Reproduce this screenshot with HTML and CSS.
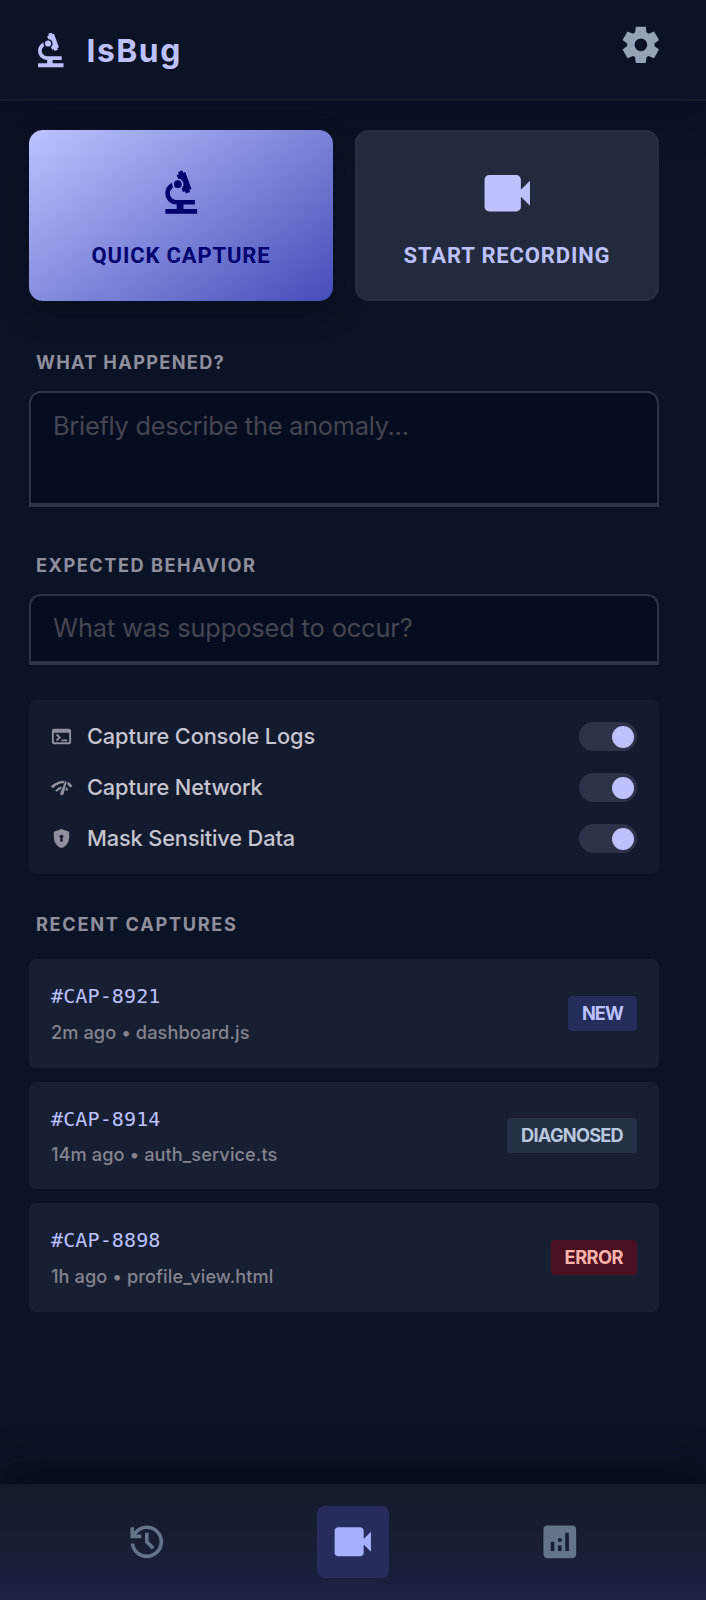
FILE: index.html
```html
<!DOCTYPE html>
<html lang="en">

<head>
    <meta charset="UTF-8">
    <meta name="viewport" content="width=device-width, initial-scale=1.0">
    <title>IsBug</title>
    <link rel="stylesheet" href="styles.css">
</head>

<body>
    <!-- shared icons -->
    <svg class="sprite">
        <symbol id="biotech" viewBox="0 0 24 24">
            <path d="M5 21v-2.1h5V17c-2.76 0-5-2.24-5-5 0-2.08 1.28-3.87 3.09-4.62C8.04 7.58 8 7.79 8 8c0 .54.17 1.03.46 1.44C7.59 9.96 7 10.91 7 12c0 1.66 1.34 3 3 3h8v2h-5v1.9h6V21z" />
            <path d="M10.56 5.51C11.91 5.54 13 6.64 13 8c0 .75-.33 1.41-.85 1.87l.59 1.62.94-.34.34.94 1.88-.68-.34-.94.94-.34-2.74-7.53-.94.34-.34-.94-1.88.68.34.94-.94.35z" />
            <circle cx="10.5" cy="8" r="1.7" />
        </symbol>
        <symbol id="videocam" viewBox="0 -960 960 960">
            <path d="M160-160q-33 0-56.5-23.5T80-240v-480q0-33 23.5-56.5T160-800h480q33 0 56.5 23.5T720-720v180l160-160v440L720-420v180q0 33-23.5 56.5T640-160H160Z" />
        </symbol>
    </svg>

    <header class="header">
        <div class="brand">
            <svg class="icon"><use href="#biotech" /></svg>
            <h1>IsBug</h1>
        </div>
        <button class="settings">
            <svg class="icon" viewBox="0 -960 960 960">
                <path d="m370-80-16-128q-13-5-24.5-12T307-235l-119 50L78-375l103-78q-1-7-1-13.5v-27q0-6.5 1-13.5L78-585l110-190 119 50q11-8 23-15t24-12l16-128h220l16 128q13 5 24.5 12t22.5 15l119-50 110 190-103 78q1 7 1 13.5v27q0 6.5-2 13.5l103 78-110 190-118-50q-11 8-23 15t-24 12L590-80H370Zm112-260q58 0 99-41t41-99q0-58-41-99t-99-41q-59 0-99.5 41T342-480q0 58 40.5 99t99.5 41Z" />
            </svg>
        </button>
    </header>

    <main class="main">
        <div class="actions">
            <button class="action primary">
                <svg class="icon-lg"><use href="#biotech" /></svg>
                <span>QUICK CAPTURE</span>
            </button>
            <button class="action secondary">
                <svg class="icon-lg"><use href="#videocam" /></svg>
                <span>START RECORDING</span>
            </button>
        </div>

        <label class="label what" for="what">WHAT HAPPENED?</label>
        <textarea class="field area" id="what" placeholder="Briefly describe the anomaly..."></textarea>

        <label class="label expected" for="expected">EXPECTED BEHAVIOR</label>
        <input class="field line" id="expected" type="text" placeholder="What was supposed to occur?">

        <!-- capture options -->
        <div class="options">
            <div class="option">
                <svg class="icon-sm" viewBox="0 -960 960 960">
                    <path d="M160-160q-33 0-56.5-23.5T80-240v-480q0-33 23.5-56.5T160-800h640q33 0 56.5 23.5T880-720v480q0 33-23.5 56.5T800-160H160Zm0-80h640v-400H160v400Zm140-40-56-56 103-104-104-104 57-56 160 160-160 160Zm180 0v-80h240v80H480Z" />
                </svg>
                <span class="name">Capture Console Logs</span>
                <span class="toggle"></span>
            </div>
            <div class="option">
                <svg class="icon-sm" viewBox="0 0 69 69">
                    <path d="M2 31Q20 14 44 14L41 22Q23 22 9 37ZM15 44Q24 33 36 31L32 40Q25 42 21 47ZM46 15L50 17L41 54Q39 58 34 58Q29 56 31 50ZM54 17Q62 21 67 30L61 35Q56 28 51 25ZM49 33Q53 36 55 41L51 45L46 42Z" />
                </svg>
                <span class="name">Capture Network</span>
                <span class="toggle"></span>
            </div>
            <div class="option">
                <svg class="icon-sm" viewBox="0 -960 960 960">
                    <path d="M420-360h120l-23-129q20-10 31.5-29t11.5-42q0-33-23.5-56.5T480-640q-33 0-56.5 23.5T400-560q0 23 11.5 42t31.5 29l-23 129Zm60 280q-139-35-229.5-159.5T160-516v-244l320-120 320 120v244q0 152-90.5 276.5T480-80Z" />
                </svg>
                <span class="name">Mask Sensitive Data</span>
                <span class="toggle"></span>
            </div>
        </div>

        <h2 class="label recent">RECENT CAPTURES</h2>
        <div class="captures">
            <div class="capture">
                <div>
                    <p class="cap-id">#CAP-8921</p>
                    <p class="meta">2m ago • dashboard.js</p>
                </div>
                <span class="badge new">NEW</span>
            </div>
            <div class="capture short">
                <div>
                    <p class="cap-id">#CAP-8914</p>
                    <p class="meta">14m ago • auth_service.ts</p>
                </div>
                <span class="badge diagnosed">DIAGNOSED</span>
            </div>
            <div class="capture">
                <div>
                    <p class="cap-id">#CAP-8898</p>
                    <p class="meta">1h ago • profile_view.html</p>
                </div>
                <span class="badge error">ERROR</span>
            </div>
        </div>
    </main>

    <nav class="nav">
        <a class="tab">
            <svg class="icon" viewBox="0 -960 960 960">
                <path d="M480-120q-138 0-240.5-91.5T122-440h82q14 104 92.5 172T480-200q117 0 198.5-81.5T760-480q0-117-81.5-198.5T480-760q-69 0-129 32t-101 88h110v80H120v-240h80v94q51-64 124.5-99T480-840q75 0 140.5 28.5t114 77q48.5 48.5 77 114T840-480q0 75-28.5 140.5t-77 114q-48.5 48.5-114 77T480-120Zm112-192L440-464v-216h80v184l128 128-56 56Z" />
            </svg>
        </a>
        <a class="tab active">
            <svg class="icon"><use href="#videocam" /></svg>
        </a>
        <a class="tab">
            <svg class="icon" viewBox="0 -960 960 960">
                <path d="M280-280h80v-200h-80v200Zm320 0h80v-400h-80v400Zm-160 0h80v-120h-80v120Zm0-200h80v-80h-80v80ZM200-120q-33 0-56.5-23.5T120-200v-560q0-33 23.5-56.5T200-840h560q33 0 56.5 23.5T840-760v560q0 33-23.5 56.5T760-120H200Z" />
            </svg>
        </a>
    </nav>
</body>

</html>
```
FILE: styles.css
```css
* {
    margin: 0;
    padding: 0;
    box-sizing: border-box;
}

body {
    display: flex;
    flex-direction: column;
    height: 1600px;
    overflow: hidden;
    background-color: #0b1326;
    color: #c7c5d0;
    font-family: Inter, "Liberation Sans", sans-serif;
}

button {
    border: none;
    background: none;
    font-family: inherit;
}

svg {
    display: block;
    fill: currentColor;
    flex-shrink: 0;
}

.sprite {
    width: 0;
    height: 0;
    position: absolute;
}

.icon {
    width: 43.6px;
    height: 43.6px;
}

.icon-lg {
    width: 54.5px;
    height: 54.5px;
}

.icon-sm {
    width: 23px;
    height: 23px;
    margin-left: -1px;
    color: #908f9d;
}

/* header */
.header {
    display: flex;
    justify-content: space-between;
    align-items: flex-start;
    height: 101px;
    padding: 23px 43.5px 0 29px;
    border-bottom: 2px solid #171f30;
    box-shadow: 0 8px 48px rgba(6, 0, 30, 0.4);
    flex-shrink: 0;
}

.brand {
    display: flex;
    align-items: center;
    gap: 14px;
    padding-top: 6px;
    color: #bdc2ff;
}

.brand h1 {
    font-size: 31.8px;
    font-weight: 700;
    line-height: 44px;
    letter-spacing: 1.5px;
}

.settings {
    color: #94a3b8;
}

/* content */
.main {
    flex: 1;
    display: flex;
    flex-direction: column;
    padding: 29px 47px 0 29px;
}

.actions {
    display: grid;
    grid-template-columns: 1fr 1fr;
    gap: 22px;
    margin-bottom: 47px;
}

.action {
    display: flex;
    flex-direction: column;
    align-items: center;
    height: 171px;
    padding-top: 36px;
    border-radius: 14px;
    font-family: Roboto, Inter, sans-serif;
    font-size: 22px;
    font-weight: 700;
    line-height: 30px;
    letter-spacing: 0.85px;
}

.action span {
    margin-top: 20px;
}

.primary {
    background: linear-gradient(145deg, #bdc2ff, #444eb8);
    box-shadow: 0 12px 30px rgba(8, 6, 20, 0.3);
    color: #00006e;
}

.secondary {
    background-color: #222a3d;
    box-shadow: inset 0 0 0 2px #272e42;
    color: #bdc2ff;
}

.label {
    height: 29px;
    padding-left: 7px;
    margin-bottom: 14px;
    color: #908f9d;
    font-size: 18.2px;
    font-weight: 700;
    line-height: 29px;
}

.what {
    letter-spacing: 1.3px;
}

.expected {
    letter-spacing: 1.5px;
}

.recent {
    margin-bottom: 21px;
    line-height: 30px;
    letter-spacing: 1.68px;
}

.field {
    display: block;
    width: 100%;
    border: 2px solid #2d3449;
    border-bottom-width: 4px;
    border-radius: 12px 12px 0 0;
    background-color: #060d20;
    color: #c7c5d0;
    font-family: inherit;
    font-size: 25.4px;
    line-height: 36px;
    resize: none;
    outline: none;
}

.field::placeholder {
    color: #464652;
}

.area {
    height: 116px;
    padding: 15px 22px;
    margin-bottom: 44px;
    letter-spacing: -0.27px;
}

.line {
    height: 71px;
    padding: 0 22px 2px;
    margin-bottom: 35px;
    letter-spacing: -0.13px;
}

/* options */
.options {
    display: flex;
    flex-direction: column;
    gap: 22px;
    height: 174px;
    padding: 22px;
    margin-bottom: 35px;
    border-radius: 7px;
    background-color: #131b2e;
}

.option {
    display: flex;
    align-items: center;
    height: 29px;
}

.option .name {
    flex: 1;
    margin-left: 14px;
    padding-bottom: 2px;
    font-size: 21.8px;
    font-weight: 500;
    letter-spacing: -0.15px;
}

.toggle {
    width: 58px;
    height: 29px;
    padding: 3.5px;
    border-radius: 15px;
    background-color: #2d3449;
}

.toggle::after {
    content: "";
    display: block;
    width: 22px;
    height: 22px;
    margin-left: auto;
    border-radius: 50%;
    background-color: #bdc2ff;
}

/* recent captures */
.captures {
    display: flex;
    flex-direction: column;
    gap: 14px;
}

.capture {
    display: flex;
    justify-content: space-between;
    align-items: center;
    height: 109px;
    padding: 0 22px;
    border-radius: 7px;
    background-color: #171f33;
}

.capture.short {
    height: 107px;
}

.cap-id {
    color: #bdc2ff;
    font-family: "DejaVu Sans Mono", monospace;
    font-size: 20px;
    line-height: 36px;
    letter-spacing: 0.13px;
}

.meta {
    color: #85848f;
    font-size: 18.2px;
    font-weight: 500;
    line-height: 36px;
    letter-spacing: 0.07px;
}

.short .meta {
    line-height: 34px;
}

.badge {
    height: 35px;
    padding: 0 14px;
    border-radius: 4px;
    font-size: 18.2px;
    font-weight: 700;
    line-height: 35px;
    letter-spacing: -0.9px;
}

.new {
    background-color: #252d5b;
    color: #bdc2ff;
}

.diagnosed {
    background-color: #243043;
    color: #b9c8de;
    letter-spacing: -0.75px;
}

.error {
    background-color: #4a1021;
    color: #ffb4ab;
    letter-spacing: -0.5px;
}

/* bottom navigation */
.nav {
    display: flex;
    justify-content: space-around;
    height: 116px;
    padding: 22px 43.5px 0;
    background: linear-gradient(#131b2b, #1b2140);
    box-shadow: 0 -8px 44px rgba(8, 8, 18, 0.8);
    flex-shrink: 0;
}

.tab {
    display: flex;
    align-items: center;
    justify-content: center;
    width: 72px;
    height: 72px;
    border-radius: 7px;
    color: #64748b;
}

.tab.active {
    background-color: #262c5c;
    color: #a5b0ff;
}
```
